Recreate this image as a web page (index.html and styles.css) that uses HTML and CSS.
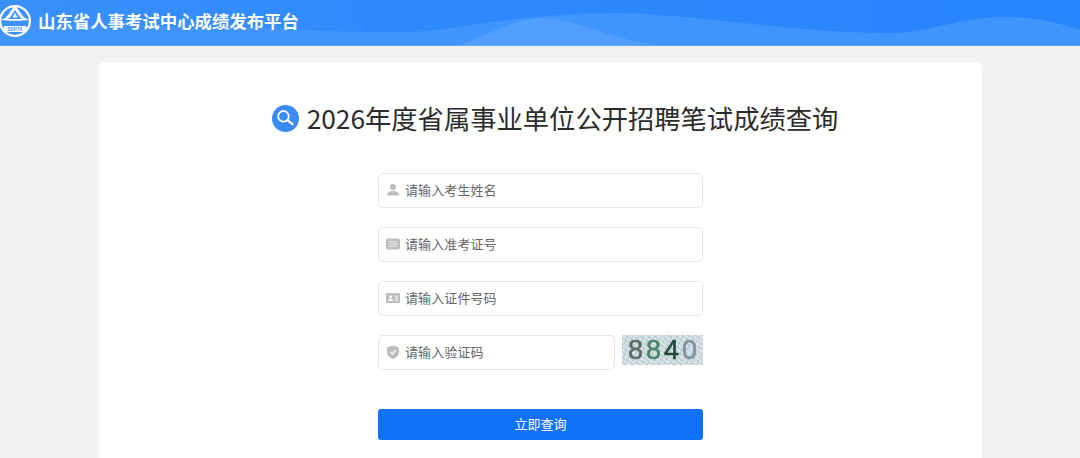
FILE: index.html
```html
<!DOCTYPE html>
<html lang="zh-CN">
<head>
<meta charset="utf-8">
<title>山东省人事考试中心成绩发布平台</title>
<link rel="stylesheet" href="styles.css">
</head>
<body>
<header class="topbar">
  <svg class="waves" viewBox="0 0 1080 45" preserveAspectRatio="none" aria-hidden="true">
    <path class="wave-back" d="M0 24C100 25 200 26 290 29C330 32 390 33 429 31C480 24 540 13 612 13C690 13 790 33 888 33C930 33 960 17 1003 17C1035 17 1055 22 1080 30V45H0Z"/>
    <path class="wave-front" d="M461 45C490 32 520 18 544 18C570 18 610 38 654 45Z"/>
  </svg>
  <svg class="logo" viewBox="0 0 32 32" aria-hidden="true">
    <circle cx="16" cy="16" r="16" fill="#fff"/>
    <circle cx="16" cy="16" r="13.8" fill="#3d92fb"/>
    <path d="M16 0L9 10C7.5 12 5 14 2 15C8 16 24 16 30 15C27 14 24.500 12 23 10Z" fill="#fff"/>
    <path d="M16 5L12 11C11 12.500 10 13.300 8.500 14H23.500C22 13.300 21 12.500 20 11Z" fill="#3d92fb"/>
    <path d="M16 8L18.500 12.500H13.500Z" fill="#fff"/>
    <path d="M6 19C10 17 22 17 26 19L25 22H7Z" fill="#3d92fb"/>
    <rect x="4.500" y="21" width="23" height="6" rx="1" fill="#fff"/>
    <text class="logo-text" x="16" y="25.800">SDPTA</text>
  </svg>
  <h1 class="brand">山东省人事考试中心成绩发布平台</h1>
</header>
<main class="card">
  <h2 class="title">
    <svg class="title-icon" viewBox="0 0 27 27" aria-hidden="true">
      <circle cx="13.500" cy="13.500" r="13.500" fill="#3a8af3"/>
      <circle cx="11.500" cy="11.300" r="5.300" fill="none" stroke="#fff" stroke-width="1.800"/>
      <path d="M15.500 15.200L20.500 19.200" stroke="#fff" stroke-width="2.200" stroke-linecap="round"/>
    </svg>
    <span>2026年度省属事业单位公开招聘笔试成绩查询</span>
  </h2>
  <form class="form">
    <div class="field">
      <svg class="field-icon" viewBox="0 0 14 14" aria-hidden="true"><circle cx="7" cy="4" r="3" fill="#bdbdbd"/><path d="M1 12.500C1 9.500 3.500 8 7 8S13 9.500 13 12.500Z" fill="#bdbdbd"/></svg>
      <span class="hint">请输入考生姓名</span>
    </div>
    <div class="field">
      <svg class="field-icon" viewBox="0 0 14 14" aria-hidden="true"><rect y="1.500" width="14" height="11" rx="2" fill="#bdbdbd"/><path d="M2.500 4.800H11.500M2.500 7H11.500M2.500 9.200H11.500" stroke="#eee" stroke-width="1"/></svg>
      <span class="hint">请输入准考证号</span>
    </div>
    <div class="field">
      <svg class="field-icon" viewBox="0 0 14 14" aria-hidden="true"><rect y="2" width="14" height="10" rx="1.200" fill="#bdbdbd"/><circle cx="4.600" cy="5.800" r="1.500" fill="#fff"/><path d="M2 10C2 8.400 3.200 7.800 4.600 7.800S7.200 8.400 7.200 10Z" fill="#fff"/><path d="M9 5.200H12.200M9 7.200H12.200M9 9.200H12.200" stroke="#fff" stroke-width=".9"/></svg>
      <span class="hint">请输入证件号码</span>
    </div>
    <div class="captcha-row">
      <div class="field captcha-field">
        <svg class="field-icon" viewBox="0 0 14 14" aria-hidden="true"><path d="M7 .5L13 2.500V7C13 10.500 10.500 12.700 7 14C3.500 12.700 1 10.500 1 7V2.500Z" fill="#bdbdbd"/><path d="M4.300 7L6.300 9L9.800 5.200" fill="none" stroke="#f2f2f2" stroke-width="1.300"/></svg>
        <span class="hint">请输入验证码</span>
      </div>
      <div class="captcha"><span class="d1">8</span><span class="d2">8</span><span class="d3">4</span><span class="d4">0</span></div>
    </div>
    <button class="submit" type="button">立即查询</button>
  </form>
</main>
</body>
</html>
```
FILE: styles.css
```css
* { box-sizing: border-box; }
html, body { margin: 0; height: 100%; overflow: hidden; }
body {
  background: #f2f2f2;
  font-family: "Noto Sans CJK SC", "Noto Sans", sans-serif;
}
.topbar {
  position: relative;
  height: 46px;
  display: flex;
  align-items: center;
  gap: 7px;
  background: linear-gradient(90deg, #3a90fb 0%, #2f8afd 35%, #2684fd 100%);
  border-bottom: 1px solid #62a8fc;
  overflow: hidden;
}
.waves { position: absolute; inset: 0; width: 100%; height: 100%; }
.wave-back { fill: #4095fc; }
.wave-front { fill: #529efc; }
.logo { position: relative; width: 32px; height: 32px; margin: -3px 0 0 -1px; flex: none; }
.logo-text {
  font-family: "Liberation Sans", sans-serif;
  font-size: 4.500px;
  font-weight: 700;
  fill: #3d92fb;
  text-anchor: middle;
}
.brand {
  position: relative;
  margin: -4px 0 0;
  font-size: 17.400px;
  line-height: 42px;
  font-weight: 700;
  color: #fff;
}
.card {
  width: 883px;
  margin: 16px 0 0 99px;
  height: 396px;
  background: #fff;
  border-radius: 6px 6px 0 0;
  padding-top: 36px;
}
.title {
  margin: 0;
  display: flex;
  justify-content: center;
  align-items: center;
  gap: 8px;
  height: 38px;
  padding-left: 29px;
  font-size: 26.300px;
  font-weight: 400;
  color: #2b2b2b;
}
.title-icon { width: 27px; height: 27px; flex: none; margin-top: 3px; }
.form {
  width: 325px;
  margin: 37px 0 0 279px;
  display: flex;
  flex-direction: column;
  gap: 19px;
}
.field {
  height: 35px;
  display: flex;
  align-items: center;
  gap: 5px;
  padding-left: 7px;
  border: 1px solid #e6e6e6;
  border-radius: 5px;
  background: #fff;
}
.field-icon { width: 14px; height: 14px; flex: none; margin-top: -1px; }
.hint { font-size: 13px; color: #666; margin-top: -2px; letter-spacing: .1px; }
.captcha-row { display: flex; align-items: flex-start; gap: 7px; }
.captcha-field { width: 237px; }
.captcha {
  width: 81px;
  height: 30px;
  display: flex;
  justify-content: center;
  align-items: center;
  gap: 3px;
  font-family: "Liberation Sans", sans-serif;
  font-size: 27px;
  line-height: 30px;
  -webkit-text-stroke: .6px currentColor;
  filter: blur(.6px);
  background-color: #cbd9df;
  background-image:
    repeating-linear-gradient(35deg, rgba(255,255,255,.45) 0 1px, transparent 1px 4px),
    repeating-linear-gradient(115deg, rgba(110,140,170,.25) 0 1px, transparent 1px 5px);
}
.d1 { color: #5d6b63; }
.d2 { color: #4d8468; }
.d3 { color: #1f4a3c; }
.d4 { color: #7b919b; }
.submit {
  height: 31px;
  margin-top: 20px;
  padding: 0 0 2px;
  border: 0;
  border-radius: 3px;
  background: #0f72fb;
  color: #fff;
  font-family: inherit;
  font-size: 13px;
}
```
